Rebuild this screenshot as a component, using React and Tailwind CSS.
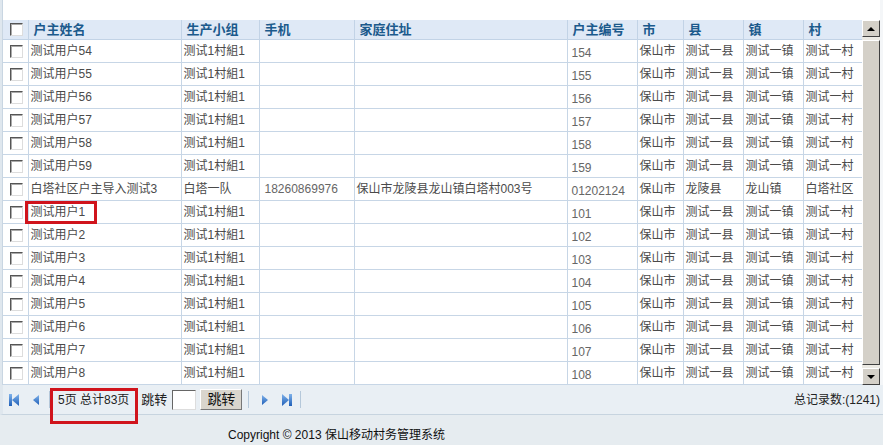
import React from "react";

const cols = [
  { key: "name", label: "户主姓名", w: "w-[153px]" },
  { key: "group", label: "生产小组", w: "w-[78px]" },
  { key: "phone", label: "手机", w: "w-[95px]" },
  { key: "addr", label: "家庭住址", w: "w-[213px]" },
  { key: "no", label: "户主编号", w: "w-[70px]" },
  { key: "city", label: "市", w: "w-[46px]" },
  { key: "county", label: "县", w: "w-[60px]" },
  { key: "town", label: "镇", w: "w-[60px]" },
  { key: "village", label: "村", w: "w-[59px]" },
];

const testRow = (name, no) => ({
  name,
  group: "测试1村組1",
  phone: "",
  addr: "",
  no,
  city: "保山市",
  county: "测试一县",
  town: "测试一镇",
  village: "测试一村",
});

const rows = [
  testRow("测试用户54", "154"),
  testRow("测试用户55", "155"),
  testRow("测试用户56", "156"),
  testRow("测试用户57", "157"),
  testRow("测试用户58", "158"),
  testRow("测试用户59", "159"),
  {
    name: "白塔社区户主导入测试3",
    group: "白塔一队",
    phone: "18260869976",
    addr: "保山市龙陵县龙山镇白塔村003号",
    no: "01202124",
    city: "保山市",
    county: "龙陵县",
    town: "龙山镇",
    village: "白塔社区",
  },
  testRow("测试用户1", "101"),
  testRow("测试用户2", "102"),
  testRow("测试用户3", "103"),
  testRow("测试用户4", "104"),
  testRow("测试用户5", "105"),
  testRow("测试用户6", "106"),
  testRow("测试用户7", "107"),
  testRow("测试用户8", "108"),
];

const Checkbox = () => (
  <span className="block w-[13px] h-[13px] ml-[7px] bg-white border border-t-[#555] border-l-[#555] border-b-[#ddd] border-r-[#ddd] shadow-[inset_1px_1px_0_#aaa]" />
);

const Sep = () => <span className="w-px h-[17px] bg-[#b5c8da] mx-[6px]" />;

const Tri = ({ dir = "left", bar = false }) => (
  <svg width="14" height="16" viewBox="0 0 14 16">
    <defs>
      <linearGradient id={`g-${dir}-${bar}`} x1="0" y1="0" x2="0" y2="1">
        <stop offset="0" stopColor="#7fb2ea" />
        <stop offset="1" stopColor="#1f5fb8" />
      </linearGradient>
    </defs>
    {dir === "left" ? (
      <>
        {bar && <rect x="2" y="2" width="3" height="12" fill={`url(#g-${dir}-${bar})`} />}
        <polygon points={bar ? "12,2 5,8 12,14" : "10,3 4,8 10,13"} fill={`url(#g-${dir}-${bar})`} />
      </>
    ) : (
      <>
        <polygon points={bar ? "2,2 9,8 2,14" : "4,3 10,8 4,13"} fill={`url(#g-${dir}-${bar})`} />
        {bar && <rect x="9" y="2" width="3" height="12" fill={`url(#g-${dir}-${bar})`} />}
      </>
    )}
  </svg>
);

const ScrollBtn = ({ up }) => (
  <div className="h-[17px] bg-[#d4d0c8] border border-t-white border-l-white border-b-[#404040] border-r-[#404040] flex items-center justify-center">
    <span
      className={
        up
          ? "w-0 h-0 border-l-[4px] border-r-[4px] border-b-[4px] border-l-transparent border-r-transparent border-b-black"
          : "w-0 h-0 border-l-[4px] border-r-[4px] border-t-[4px] border-l-transparent border-r-transparent border-t-black"
      }
    />
  </div>
);

export default function App() {
  return (
    <div
      className="relative w-[883px] h-[445px] overflow-hidden bg-white text-[12px] text-[#333]"
      style={{ fontFamily: '"Liberation Sans", Arial, "Noto Sans CJK SC", sans-serif' }}
    >
      <div className="flex h-[385px]">
        {/* left edge */}
        <div className="w-[3px] bg-[#dfe7ee] border-r border-[#c9d6e2]" />

        <div className="w-[859px] flex flex-col">
          <div className="h-[20px] bg-white" />
          <table className="table-fixed border-collapse w-[859px]">
            <thead>
              <tr className="h-[20px] bg-[#dfe9f6]">
                <th className="w-[25px] p-0 border-b border-[#c2d3e6]">
                  <Checkbox />
                </th>
                {cols.map((c) => (
                  <th
                    key={c.key}
                    className={`${c.w} p-0 pl-[5px] text-left align-middle font-bold text-[13px] text-[#1b5a8c] border-l border-b border-[#c2d3e6] whitespace-nowrap overflow-hidden`}
                  >
                    {c.label}
                  </th>
                ))}
              </tr>
            </thead>
            <tbody>
              {rows.map((r, i) => (
                <tr key={i} className="h-[23px] bg-white">
                  <td className="p-0 border-b border-[#c7d6e6]">
                    <Checkbox />
                  </td>
                  {cols.map((c) => (
                    <td
                      key={c.key}
                      className={`p-0 border-l border-b border-[#c7d6e6] whitespace-nowrap overflow-hidden ${
                        c.key === "no"
                          ? "text-[#666] pt-[3px] pl-[4px]"
                          : c.key === "phone"
                          ? "text-[#666] pl-[5px]"
                          : "text-[#4a4a4a] pl-[2px]"
                      }`}
                    >
                      {r[c.key]}
                    </td>
                  ))}
                </tr>
              ))}
            </tbody>
          </table>
        </div>

        {/* scrollbar */}
        <div className="w-[18px] flex flex-col pt-[20px] bg-white">
          <ScrollBtn up />
          <div className="flex-1 flex flex-col bg-[#eceae4] py-[3px]">
            <div className="flex-1 bg-[#d4d0c8] border border-t-white border-l-white border-b-[#404040] border-r-[#404040]" />
          </div>
          <ScrollBtn />
        </div>
        <div className="w-[3px] bg-[#f4f6f8]" />
      </div>

      {/* pager */}
      <div className="h-[30px] flex items-center bg-[#e9eff4] border-l-[3px] border-l-[#dfe7ee] border-b border-[#c7d4df] pl-[4px] pr-[3px]">
        <Tri dir="left" bar />
        <span className="w-[8px]" />
        <Tri dir="left" />
        <Sep />
        <span className="text-[#222] ml-[2px]">5页 总计83页</span>
        <Sep />
        <span className="text-[#222] text-[13px] -ml-[1px]">跳转</span>
        <span className="ml-[5px] w-[24px] h-[20px] bg-white border border-t-[#666] border-l-[#666] border-b-[#ddd] border-r-[#ddd]" />
        <span className="ml-[4px] h-[21px] px-[6px] flex items-center text-[14px] text-[#111] bg-[#d9d5cd] border border-t-white border-l-white border-b-[#777] border-r-[#777]">
          跳转
        </span>
        <Sep />
        <span className="ml-[3px]" />
        <Tri dir="right" />
        <span className="w-[8px]" />
        <Tri dir="right" bar />
        <Sep />
        <span className="ml-auto text-[#222] text-[12px]">总记录数:(1241)</span>
      </div>

      {/* bottom */}
      <div className="h-[30px] bg-[#e6ecf0] pl-[228px] pt-[11px] text-[12px] text-[#111]">
        Copyright © 2013 保山移动村务管理系统
      </div>

      {/* annotations */}
      <div className="absolute left-[25px] top-[201px] w-[72px] h-[23px] border-[3px] border-[#d0141c]" />
      <div className="absolute left-[50px] top-[388px] w-[88px] h-[36px] border-[3px] border-[#d0141c]" />
    </div>
  );
}
